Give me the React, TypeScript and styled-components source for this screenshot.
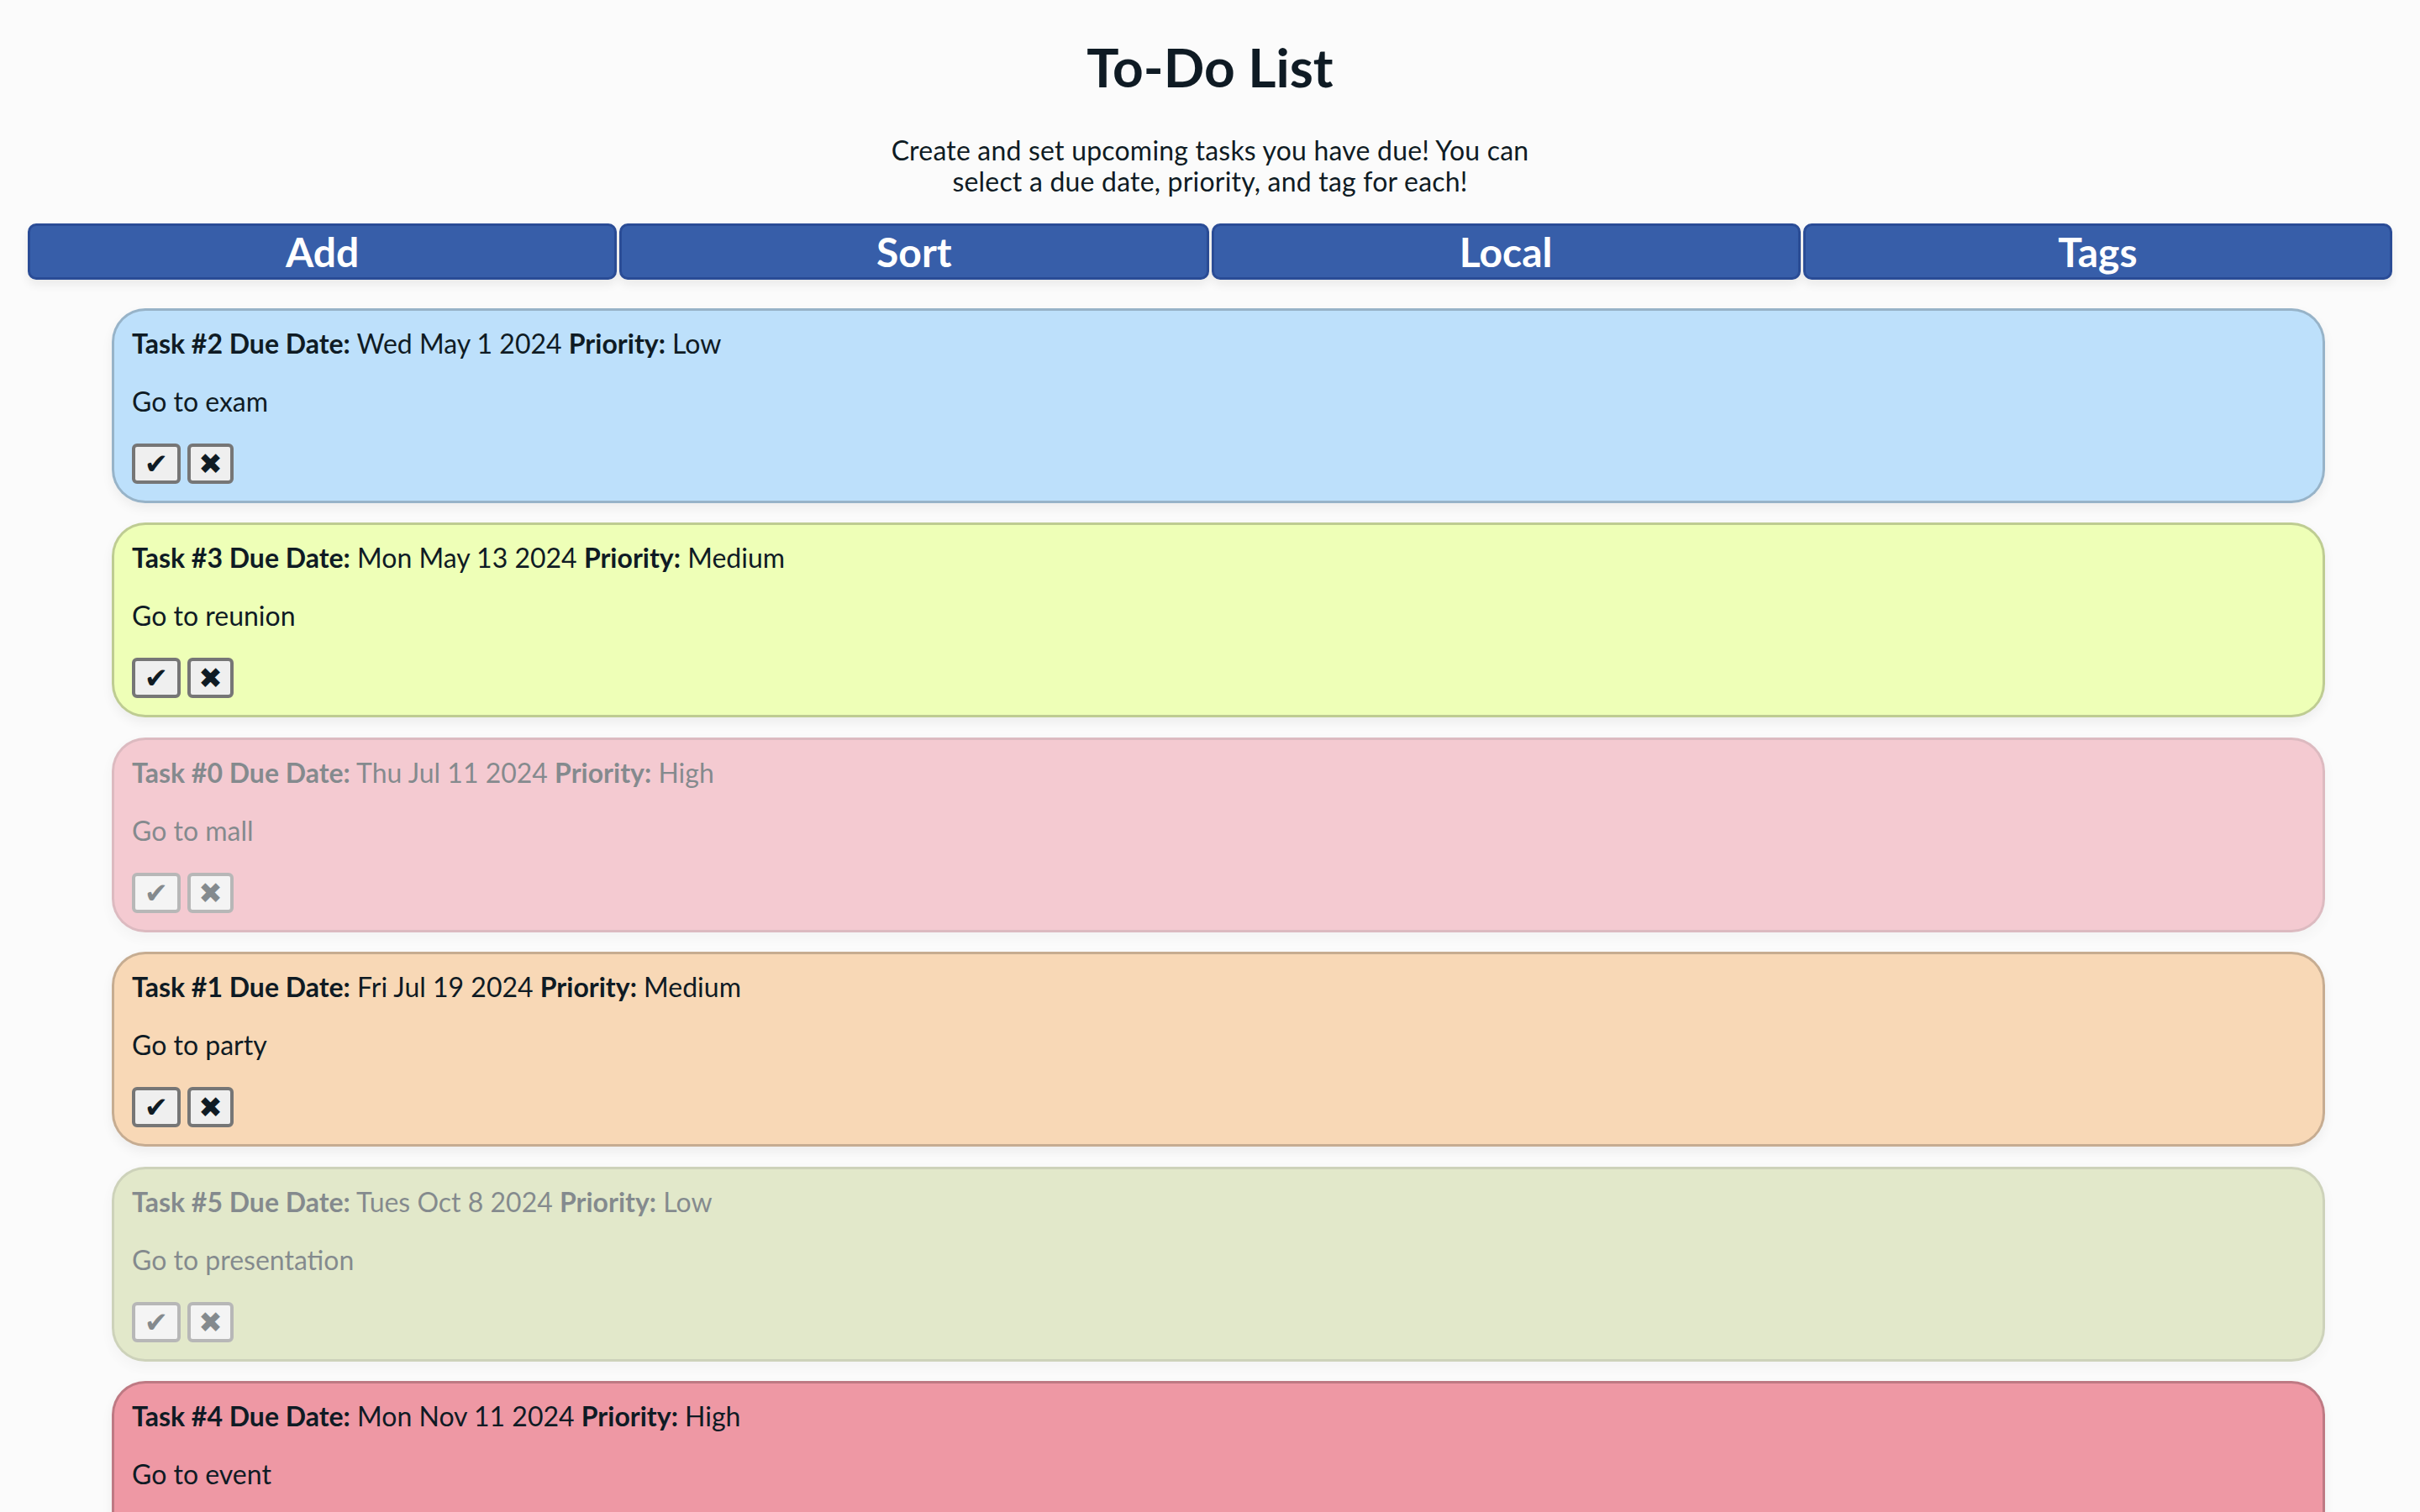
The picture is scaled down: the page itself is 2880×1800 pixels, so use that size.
import React from "react";
import styled, { createGlobalStyle } from "styled-components";

const GlobalStyle = createGlobalStyle`
  html, body {
    margin: 0;
    padding: 0;
    background: #fbfbfb;
  }
  body {
    font-family: Lato, "Open Sans", "Liberation Sans", sans-serif;
    color: #0f1b24;
  }
`;

const Page = styled.div`
  padding-top: 43px;
`;

const Title = styled.h1`
  margin: 0 0 43px;
  font-size: 64px;
  line-height: 74px;
  font-weight: 700;
  text-align: center;
  color: #0f1b24;
`;

const Intro = styled.p`
  max-width: 800px;
  margin: 0 auto 32px;
  font-size: 32px;
  line-height: 37px;
  letter-spacing: 0.2px;
  text-align: center;
`;

const Nav = styled.nav`
  display: grid;
  grid-template-columns: repeat(4, 1fr);
  gap: 3px;
  padding: 0 33px;
  margin-bottom: 34px;
`;

const NavButton = styled.button`
  height: 67px;
  background: #375ea9;
  border: 3px solid #2a4c96;
  border-radius: 10px;
  color: #ffffff;
  font-family: inherit;
  font-size: 48px;
  font-weight: 700;
  line-height: 1;
  padding: 0 12px;
  box-shadow: 0 6px 12px rgba(0, 0, 0, 0.07);
  cursor: pointer;
`;

const TaskList = styled.ul`
  list-style: none;
  margin: 0;
  padding: 0 113px 40px 133px;
  display: flex;
  flex-direction: column;
  gap: 23.4px;
`;

const TaskCard = styled.li<{ $bg: string; $done: boolean }>`
  background: ${(p) => p.$bg};
  border: 3px solid rgba(0, 0, 0, 0.2);
  border-radius: 40px;
  padding: 20px 21px;
  opacity: ${(p) => (p.$done ? 0.5 : 1)};
  box-shadow: 0 6px 14px rgba(0, 0, 0, 0.06);
  font-size: 32px;
  line-height: 37px;
`;

const TaskHeader = styled.div`
  white-space: nowrap;
`;

const Label = styled.b`
  font-weight: 700;
`;

const Description = styled.p`
  margin: 32px 0;
`;

const Actions = styled.div`
  display: flex;
  gap: 8px;
`;

const ActionButton = styled.button<{ $wide?: boolean }>`
  height: 48px;
  width: ${(p) => (p.$wide ? 58 : 55)}px;
  padding: 0;
  background: #efefef;
  border: 4px solid #767676;
  border-radius: 6px;
  color: #0f1b24;
  font-family: "DejaVu Sans", sans-serif;
  font-size: 34px;
  line-height: 1;
  display: flex;
  align-items: center;
  justify-content: center;
  cursor: pointer;
`;

type Task = {
  id: number;
  date: string;
  priority: string;
  text: string;
  color: string;
  done: boolean;
};

const tasks: Task[] = [
  { id: 2, date: "Wed May 1 2024", priority: "Low", text: "Go to exam", color: "#bde0fb", done: false },
  { id: 3, date: "Mon May 13 2024", priority: "Medium", text: "Go to reunion", color: "#eeffb7", done: false },
  { id: 0, date: "Thu Jul 11 2024", priority: "High", text: "Go to mall", color: "#ee9aa8", done: true },
  { id: 1, date: "Fri Jul 19 2024", priority: "Medium", text: "Go to party", color: "#f8d8b6", done: false },
  { id: 5, date: "Tues Oct 8 2024", priority: "Low", text: "Go to presentation", color: "#cad69a", done: true },
  { id: 4, date: "Mon Nov 11 2024", priority: "High", text: "Go to event", color: "#ee98a4", done: false },
];

export default function App() {
  return (
    <Page>
      <GlobalStyle />
      <Title>To-Do List</Title>
      <Intro>
        Create and set upcoming tasks you have due! You can select a due date, priority, and tag for each!
      </Intro>
      <Nav>
        <NavButton>Add</NavButton>
        <NavButton>Sort</NavButton>
        <NavButton>Local</NavButton>
        <NavButton>Tags</NavButton>
      </Nav>
      <TaskList>
        {tasks.map((t) => (
          <TaskCard key={t.id} $bg={t.color} $done={t.done}>
            <TaskHeader>
              <Label>Task #{t.id} Due Date:</Label> {t.date} <Label>Priority:</Label> {t.priority}
            </TaskHeader>
            <Description>{t.text}</Description>
            <Actions>
              <ActionButton $wide>✔</ActionButton>
              <ActionButton>✖</ActionButton>
            </Actions>
          </TaskCard>
        ))}
      </TaskList>
    </Page>
  );
}
